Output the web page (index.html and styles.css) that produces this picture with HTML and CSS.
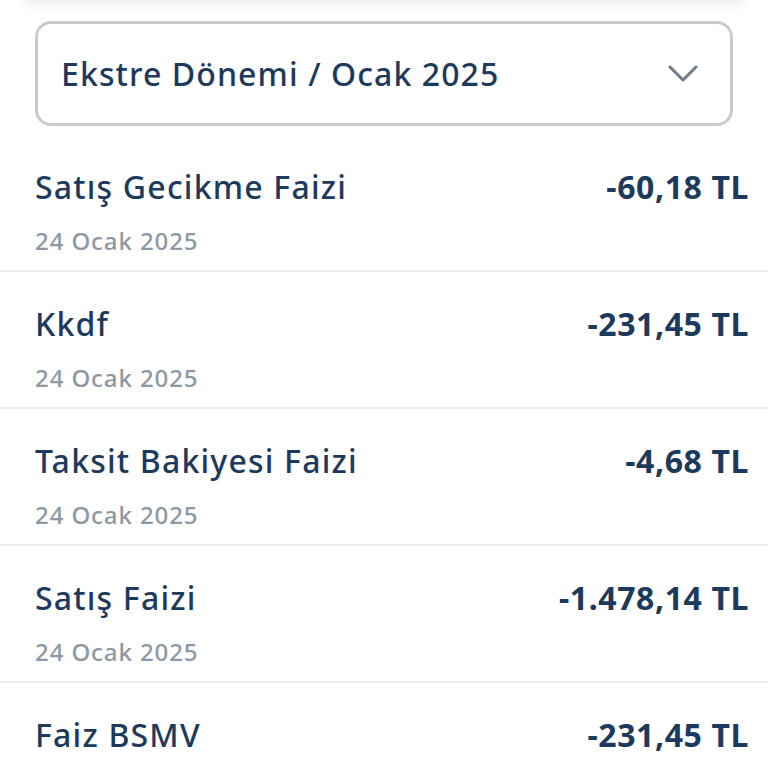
FILE: index.html
```html
<!DOCTYPE html>
<html lang="tr">
<head>
    <meta charset="UTF-8">
    <meta name="viewport" content="width=device-width, initial-scale=1.0">
    <title>Ekstre Hareketleri</title>
    <link rel="stylesheet" href="styles.css">
</head>
<body>
    <div class="top-card"></div>
    <div class="period-select">
        <span class="period-label">Ekstre Dönemi / Ocak 2025</span>
        <svg class="chevron" width="30" height="18" viewBox="0 0 30 18">
            <path d="M2 2 L15 15 L28 2" fill="none" stroke="#6f7c8a" stroke-width="3" stroke-linecap="round" stroke-linejoin="round"/>
        </svg>
    </div>
    <ul class="transactions">
        <li class="item">
            <div class="item-top">
                <span class="item-title">Satış Gecikme Faizi</span>
                <span class="item-amount">-60,18 TL</span>
            </div>
            <div class="item-date">24 Ocak 2025</div>
        </li>
        <li class="item">
            <div class="item-top">
                <span class="item-title">Kkdf</span>
                <span class="item-amount">-231,45 TL</span>
            </div>
            <div class="item-date">24 Ocak 2025</div>
        </li>
        <li class="item">
            <div class="item-top">
                <span class="item-title">Taksit Bakiyesi Faizi</span>
                <span class="item-amount">-4,68 TL</span>
            </div>
            <div class="item-date">24 Ocak 2025</div>
        </li>
        <li class="item">
            <div class="item-top">
                <span class="item-title">Satış Faizi</span>
                <span class="item-amount">-1.478,14 TL</span>
            </div>
            <div class="item-date">24 Ocak 2025</div>
        </li>
        <li class="item">
            <div class="item-top">
                <span class="item-title">Faiz BSMV</span>
                <span class="item-amount">-231,45 TL</span>
            </div>
            <div class="item-date">24 Ocak 2025</div>
        </li>
    </ul>
</body>
</html>
```

FILE: styles.css
```css
/* Genel */
body {
    font-family: "Noto Sans", "Open Sans", sans-serif;
    margin: 0;
    background-color: white;
    color: #1c3a5e;
    overflow: hidden;
}
.top-card {
    height: 20px;
    margin: -20px 20px 0;
    background-color: white;
    border-radius: 0 0 18px 18px;
    box-shadow: 0 4px 14px rgba(0, 0, 0, 0.09);
}
.period-select {
    height: 99px;
    margin: 21px 35px 9px;
    border: 3px solid #c7cbd0;
    border-radius: 16px;
    padding: 0 32px 0 23px;
    display: flex;
    align-items: center;
    justify-content: space-between;
}
.period-label {
    font-size: 32px;
    font-weight: 500;
    letter-spacing: 1.1px;
}
.chevron {
    display: block;
}
.transactions {
    list-style: none;
    margin: 0;
    padding: 0;
}
.item {
    padding: 32px 19px 12px 35px;
    border-bottom: 2px solid #eceef1;
}
.item-top {
    display: flex;
    justify-content: space-between;
    align-items: center;
    line-height: 40px;
}
.item-title {
    font-size: 32px;
    font-weight: 500;
    letter-spacing: 1.2px;
}
.item-amount {
    font-size: 32px;
    font-weight: 700;
    letter-spacing: 0.6px;
}
.item-date {
    margin-top: 17px;
    font-size: 24px;
    font-weight: 500;
    line-height: 34px;
    letter-spacing: 0.9px;
    color: #8c98a5;
}
```
